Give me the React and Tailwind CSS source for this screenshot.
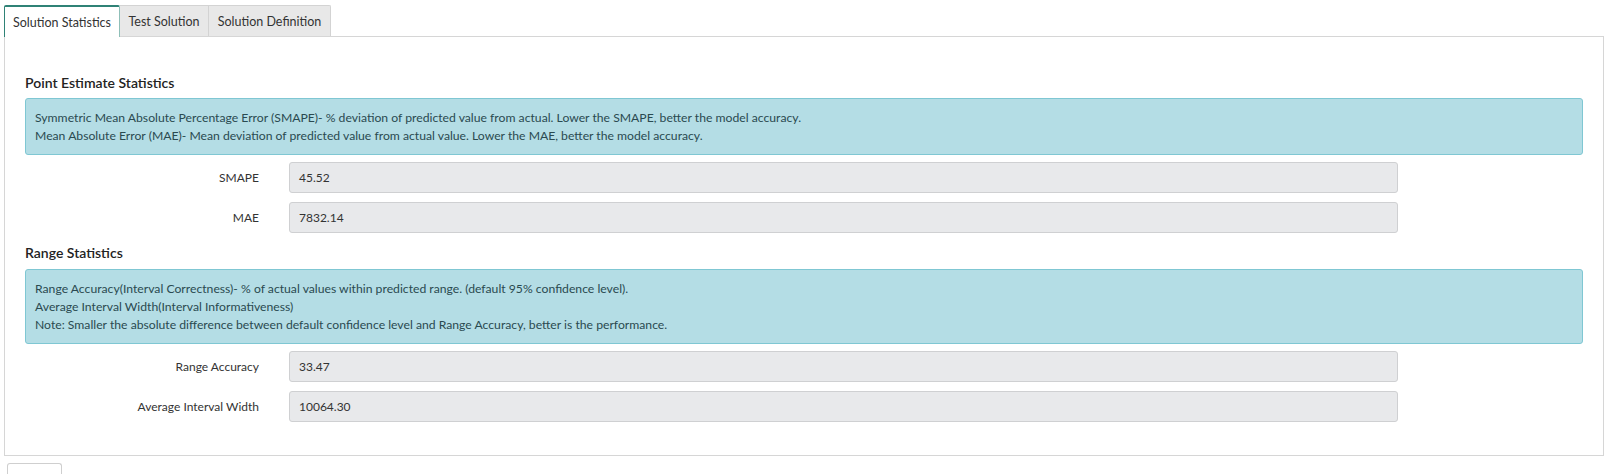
import React from "react";

const font = { fontFamily: "Lato, 'Liberation Sans', sans-serif" };

function Row({ label, value, mt }) {
  return (
    <div className={`flex items-center ${mt}`}>
      <div className="w-[234px] shrink-0 text-right text-[12px] text-[#333]">{label}</div>
      <div className="ml-[30px] flex h-[31px] w-[1109px] items-center rounded-[3px] border border-[#cfd0d2] bg-[#e8e9eb] pl-[9px] text-[12px] text-[#333]">
        {value}
      </div>
    </div>
  );
}

function Alert({ lines, mt }) {
  return (
    <div className={`${mt} rounded-[3px] border border-[#7fc7d3] bg-[#b4dde5] pl-[9px] pr-4 pt-[10px] pb-[9px] text-[12.2px] leading-[18px] text-[#2a4a50]`}>
      {lines.map((l, i) => (
        <div key={i}>{l}</div>
      ))}
    </div>
  );
}

export default function App() {
  return (
    <div className="min-h-[474px] bg-white pl-[4px] pr-[10px] pt-[5px]" style={font}>
      <div className="flex h-[31px] items-end">
        <div className="relative z-10 -mb-px flex h-[32px] w-[116px] items-center justify-center rounded-t-[2px] border-l border-t-2 border-r border-[#2f8276] border-r-[#8fbfb8] bg-white pt-[2px] text-[12.5px] text-[#333]">
          Solution Statistics
        </div>
        <div className="flex h-[31px] w-[89px] items-center justify-center border-r border-t border-[#d3d3d3] bg-[#e8e8e8] pt-[2px] text-[12.5px] text-[#333]">
          Test Solution
        </div>
        <div className="flex h-[31px] w-[122px] items-center justify-center rounded-tr-[2px] border-r border-t border-[#d3d3d3] bg-[#e8e8e8] pt-[2px] text-[12.5px] text-[#333]">
          Solution Definition
        </div>
      </div>
      <div className="w-[1600px] border border-[#d6d6d6] px-[20px] pb-[33px] pt-[36px]">
        <div className="h-[20px] text-[14px] font-semibold leading-[20px] text-[#222]">Point Estimate Statistics</div>
        <Alert
          mt="mt-[5px]"
          lines={[
            "Symmetric Mean Absolute Percentage Error (SMAPE)- % deviation of predicted value from actual. Lower the SMAPE, better the model accuracy.",
            "Mean Absolute Error (MAE)- Mean deviation of predicted value from actual value. Lower the MAE, better the model accuracy.",
          ]}
        />
        <Row label="SMAPE" value="45.52" mt="mt-[7px]" />
        <Row label="MAE" value="7832.14" mt="mt-[9px]" />
        <div className="mt-[10px] h-[20px] text-[14px] font-semibold leading-[20px] text-[#222]">Range Statistics</div>
        <Alert
          mt="mt-[6px]"
          lines={[
            "Range Accuracy(Interval Correctness)- % of actual values within predicted range. (default 95% confidence level).",
            "Average Interval Width(Interval Informativeness)",
            "Note: Smaller the absolute difference between default confidence level and Range Accuracy, better is the performance.",
          ]}
        />
        <Row label="Range Accuracy" value="33.47" mt="mt-[7px]" />
        <Row label="Average Interval Width" value="10064.30" mt="mt-[9px]" />
      </div>
      <div className="ml-[3px] mt-[7px] h-[20px] w-[55px] rounded-t-[3px] border border-b-0 border-[#cfcfcf] bg-white" />
    </div>
  );
}
